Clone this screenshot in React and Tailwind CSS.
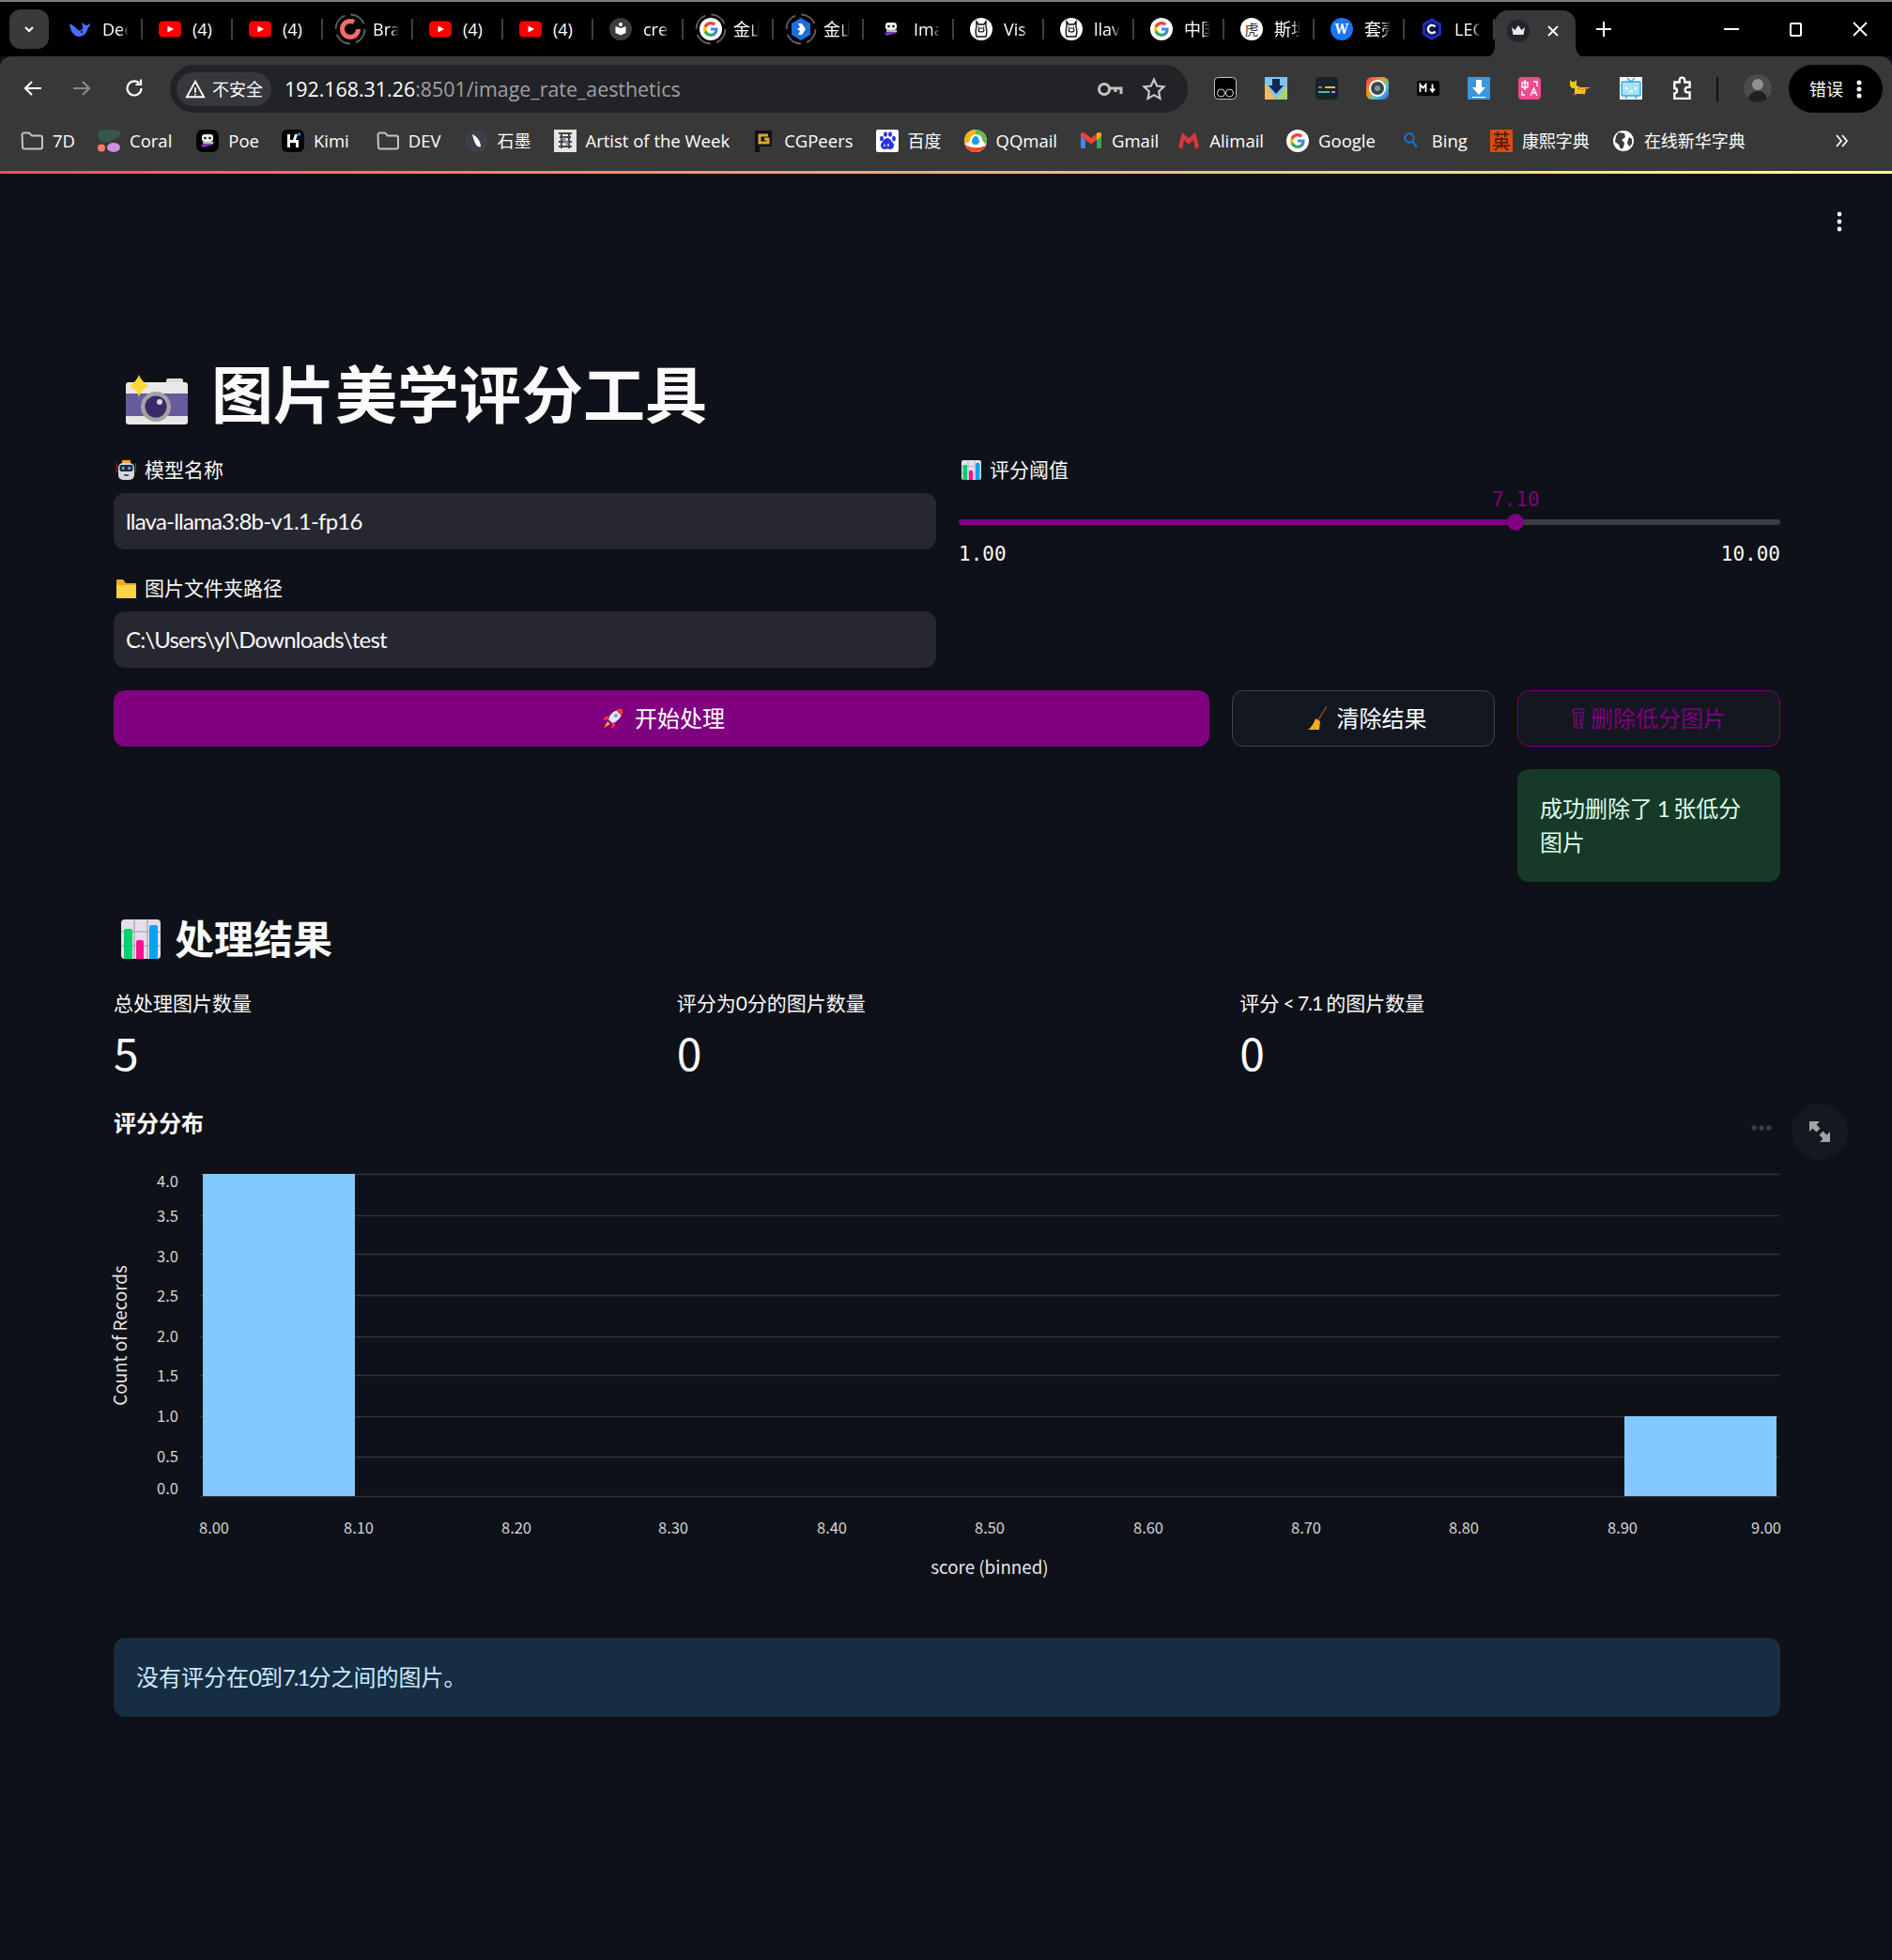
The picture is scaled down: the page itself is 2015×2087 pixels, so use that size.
import React from 'react';

const CHROME = "font-['Open_Sans','Noto_Sans_CJK_SC',sans-serif]";

// favicons ---------------------------------------------------------------
const YouTube = () => (
  <svg width="24" height="24" viewBox="0 0 24 24"><rect y="3.5" width="24" height="17" rx="4.5" fill="#ff0000" /><path d="M9.5 8.5l6.5 3.5-6.5 3.5z" fill="#fff" /></svg>
);
const Google = () => (
  <svg width="24" height="24" viewBox="0 0 24 24">
    <circle cx="12" cy="12" r="12" fill="#fff" />
    <path d="M19.6 12.2c0-.6-.1-1.100-.2-1.600H12v3h4.300c-.2 1-.8 1.800-1.600 2.400v2h2.600c1.500-1.400 2.300-3.400 2.300-5.800z" fill="#4285f4" />
    <path d="M12 20c2.200 0 4-.7 5.300-2l-2.600-2c-.7.500-1.600.8-2.700.8-2.100 0-3.900-1.400-4.500-3.300H4.800v2.100C6.100 18.200 8.900 20 12 20z" fill="#34a853" />
    <path d="M7.500 13.500c-.3-1-.3-2 0-3V8.400H4.800c-.9 1.800-.9 3.800 0 7.200z" fill="#fbbc05" />
    <path d="M12 7.200c1.200 0 2.200.4 3 1.200l2.300-2.300C15.900 4.800 14.100 4 12 4 8.900 4 6.100 5.800 4.800 8.400l2.700 2.100C8.100 8.600 9.900 7.200 12 7.200z" fill="#ea4335" />
  </svg>
);
const Whale = () => (
  <svg width="24" height="24" viewBox="0 0 24 24"><path d="M1 7C3 6 6 9 9 12c2 2 5 2 6-1 .5-2-1-4-1-6 2 1 4 3 6 3 1-1 2-2 3-2 0 2-1 4-2.500 5-.5 5-4.500 9-9.500 9S2 14 1 7z" fill="#4d6bfe" /><circle cx="14" cy="15" r="1" fill="#000" /></svg>
);
const Ringed = ({ children }) => (
  <span className="relative flex h-[24px] w-[24px] items-center justify-center">
    <svg className="absolute -left-[6px] -top-[6px]" width="36" height="36" viewBox="0 0 36 36"><circle cx="18" cy="18" r="15.500" fill="none" stroke="#5f5f5f" strokeWidth="2" strokeDasharray="18 6.300" /></svg>
    {children}
  </span>
);
const Brave = () => (
  <svg width="24" height="24" viewBox="0 0 24 24"><circle cx="12" cy="12" r="8.500" fill="none" stroke="#ef6a6a" strokeWidth="5" strokeDasharray="44 10" /></svg>
);
const Cre = () => (
  <svg width="24" height="24" viewBox="0 0 24 24"><circle cx="12" cy="12" r="12" fill="#3c3c3c" /><path d="M6.500 9l5.500 2 5.500-2v7l-5.500 2.500L6.500 16z" fill="#fff" /><circle cx="12" cy="7" r="2" fill="#fff" /></svg>
);
const KDocs = () => (
  <svg width="24" height="24" viewBox="0 0 24 24"><path d="M12 0l10 6v12l-10 6-10-6V6z" fill="#1d6fe0" /><path d="M9 6h4l4 6-4 6H9l2-4-3-2 3-2z" fill="#fff" /></svg>
);
const PoeBot = ({ bg = '#000' }) => (
  <svg width="24" height="24" viewBox="0 0 24 24"><rect width="24" height="24" rx="7" fill={bg} /><rect x="6" y="5" width="12" height="8" rx="3" fill="#eee" /><circle cx="9.500" cy="9" r="1.300" fill="#111" /><circle cx="14.500" cy="9" r="1.300" fill="#111" /><path d="M5 16l14-3-1 3-11 3z" fill="#7d3bb5" /><path d="M7 14h11" stroke="#eee" strokeWidth="1.500" /></svg>
);
const Llama = () => (
  <svg width="24" height="24" viewBox="0 0 24 24"><circle cx="12" cy="12" r="12" fill="#fff" /><path d="M7 4v6c-1 2-1 6 0 10h10c1-4 1-8 0-10V4l-2 3H9z" fill="none" stroke="#111" strokeWidth="1.400" /><ellipse cx="12" cy="13" rx="3" ry="2" fill="none" stroke="#111" strokeWidth="1.200" /><circle cx="9.500" cy="10" r=".8" fill="#111" /><circle cx="14.500" cy="10" r=".8" fill="#111" /></svg>
);
const Hu = () => (
  <span className="flex h-[24px] w-[24px] items-center justify-center rounded-full bg-white text-[15px] leading-none text-[#333]">虎</span>
);
const Wcoin = () => (
  <span className="flex h-[24px] w-[24px] items-center justify-center rounded-full bg-[#1877f2] font-serif text-[15px] font-bold leading-none text-white">W</span>
);
const Lec = () => (
  <svg width="24" height="24" viewBox="0 0 24 24"><path d="M12 0l10 6v12l-10 6-10-6V6z" fill="#1a2fb0" /><path d="M12 4l7 4v8l-7 4-7-4V8z" fill="#0b1250" /><path d="M15.500 9.500A4.200 4.200 0 1 0 15.500 14.500" fill="none" stroke="#fff" strokeWidth="2.400" /></svg>
);
const Crown = () => (
  <svg width="24" height="24" viewBox="0 0 24 24"><circle cx="12" cy="12" r="12" fill="#23242e" /><path d="M5 8l3.500 3L12 6l3.500 5L19 8l-1.500 8h-11z" fill="#e9e9e9" /></svg>
);

const Folder = () => (
  <svg width="24" height="24" viewBox="0 0 24 24"><path d="M1.500 5.500a2 2 0 0 1 2-2h5.500l3 3h9a2 2 0 0 1 2 2v10a2 2 0 0 1-2 2h-17a2 2 0 0 1-2-2z" fill="none" stroke="#c4c4c4" strokeWidth="2" /></svg>
);
const Coral = () => (
  <svg width="24" height="24" viewBox="0 0 24 24"><path d="M0 5c0-4 3-5 10-5s14 0 14 4-2 5-6 6-4 4-9 4-9-4-9-9z" fill="#37574a" /><circle cx="4" cy="19.500" r="4" fill="#ff7a59" /><ellipse cx="17" cy="19" rx="7" ry="5" fill="#d18ee2" /></svg>
);
const KimiIcon = () => (
  <svg width="24" height="24" viewBox="0 0 24 24"><rect width="24" height="24" rx="6" fill="#000" /><path d="M6 5h3v6h3l2-6h3l-2 6h3v8h-3v-5H9v5H6z" fill="#fff" /><circle cx="18.500" cy="5" r="1.800" fill="#1e88ff" /></svg>
);
const Shimo = () => (
  <svg width="24" height="24" viewBox="0 0 24 24"><circle cx="12" cy="12" r="12" fill="#3c4048" /><path d="M7 5c5 2 9 8 9 13-2 1-4 0-5-2C9 13 8 9 7 5z" fill="#fff" /></svg>
);
const Artist = () => (
  <svg width="24" height="24" viewBox="0 0 24 24"><rect width="24" height="24" fill="#e4e4e4" /><path d="M5 4h14M6 8h12M8 4v16M16 4v16M5 13h14M5 18h14" stroke="#444" strokeWidth="2" /><path d="M9 9l6 7" stroke="#8a8fb0" strokeWidth="3" /></svg>
);
const CGPeers = () => (
  <svg width="24" height="24" viewBox="0 0 24 24"><path d="M3 1h18v17H8v6H3z" fill="#111" /><path d="M17 6h-9v8h9v-4h-4" fill="none" stroke="#d5a92a" strokeWidth="3" /></svg>
);
const Baidu = () => (
  <svg width="24" height="24" viewBox="0 0 24 24"><rect width="24" height="24" rx="2" fill="#fff" /><ellipse cx="6" cy="9.500" rx="2" ry="2.700" fill="#2932e1" /><ellipse cx="10" cy="5" rx="2" ry="2.700" fill="#2932e1" /><ellipse cx="15" cy="5" rx="2" ry="2.700" fill="#2932e1" /><ellipse cx="19" cy="9.500" rx="2" ry="2.700" fill="#2932e1" /><path d="M12 9c3 0 4 3 6 5s1 7-3 7c-1 0-2-.5-3-.5s-2 .5-3 .5c-4 0-5-5-3-7s3-5 6-5z" fill="#2932e1" /><path d="M9 15.500v2.500M13 15v3" stroke="#fff" strokeWidth="1.300" /></svg>
);
const QQmail = () => (
  <svg width="24" height="24" viewBox="0 0 24 24"><circle cx="12" cy="12" r="12" fill="#fff" /><path d="M12 0a12 12 0 0 0-11.500 15.500L6 12c0-4 2-6.500 6-7z" fill="#f6b21b" /><path d="M12 0c6 0 12 5 12 12 0 2-.5 3-1 4l-4-5c0-3-2-6-7-6z" fill="#62bb46" /><path d="M.7 16C3 21 7 24 12 24c5 0 9-3 11-7-4 2-14 4-22-1z" fill="#ee4a1b" /><path d="M12 7c2 0 3.500 2 3.500 4l1 3c-1 .5-1.500 0-1.500 0 0 1-.5 1.500-1 2h-4c-.5-.5-1-1-1-2 0 0-.5.5-1.500 0l1-3C8.500 9 10 7 12 7z" fill="#1e9be8" /></svg>
);
const Gmail = () => (
  <svg width="24" height="24" viewBox="0 0 24 24"><path d="M1 20h5V11l-5-4z" fill="#4285f4" /><path d="M18 20h5V7l-5 4z" fill="#34a853" /><path d="M1 7V5c0-2 3-2.500 4-1.500l7 5.500 7-5.500c1-1 4-.5 4 1.500v2l-11 8.500z" fill="#ea4335" /><path d="M18 4v7l5-4V5c0-2-3-2.500-5-1z" fill="#fbbc05" /></svg>
);
const Alimail = () => (
  <svg width="24" height="24" viewBox="0 0 24 24"><path d="M5 3l7 6 7-6 4 15-4 3-2-10-5 5-5-5-2 10-4-3z" fill="#d9363e" /></svg>
);
const BingSearch = () => (
  <svg width="24" height="24" viewBox="0 0 24 24"><circle cx="10" cy="9" r="4.800" fill="none" stroke="#1976d2" strokeWidth="2" /><path d="M13.500 13l4.500 5.500" stroke="#1976d2" strokeWidth="2" /></svg>
);
const Kangxi = () => (
  <svg width="24" height="24" viewBox="0 0 24 24"><rect width="24" height="24" fill="#d84a12" /><path d="M4 5h16M8 2v6M16 2v6M6 10h12v4H6zM12 8v12M3 17h18M5 22l5-5M19 22l-5-5" stroke="#461804" strokeWidth="1.600" fill="none" /></svg>
);
const Globe = () => (
  <svg width="24" height="24" viewBox="0 0 24 24"><circle cx="12" cy="12" r="11" fill="#fff" /><path d="M7 3l6 1 1 4-4 3 3 3-1 5-3 2-2-5-4-3 1-6zM18 8l3 2v5l-3 3-2-4z" fill="#3a3a3a" /></svg>
);

// toolbar extension icons
const Ext = {
  glasses: <svg width="24" height="24" viewBox="0 0 24 24"><rect x=".5" y=".5" width="23" height="23" rx="4" fill="#000" stroke="#c4c4c4" /><circle cx="7.500" cy="17" r="4" fill="none" stroke="#ddd" /><circle cx="16.500" cy="17" r="4" fill="none" stroke="#ddd" /></svg>,
  map: <svg width="24" height="24" viewBox="0 0 24 24"><rect width="24" height="24" fill="#7fc4ec" /><path d="M0 6l12 18H0z" fill="#f4b860" /><path d="M24 8L12 24h12z" fill="#a5d36f" /><path d="M8 2h8v7h4l-8 9-8-9h4z" fill="#0d2a55" /></svg>,
  dark: <svg width="24" height="24" viewBox="0 0 24 24"><rect width="24" height="24" rx="4" fill="#16232b" /><rect x="3" y="10" width="4" height="2" fill="#e05d4f" /><rect x="10" y="10" width="11" height="2" fill="#eeb83d" /><rect x="3" y="15" width="12" height="2" fill="#3dbfae" /><rect x="17" y="15" width="4" height="2" fill="#c38be0" /></svg>,
  lens: <svg width="24" height="24" viewBox="0 0 24 24"><defs><linearGradient id="lg" x1="0" y1="0" x2="1" y2="1"><stop stopColor="#f0356b" /><stop offset=".4" stopColor="#f49a1e" /><stop offset=".7" stopColor="#36c6d8" /><stop offset="1" stopColor="#5a49e0" /></linearGradient></defs><rect width="24" height="24" rx="6" fill="url(#lg)" /><circle cx="12" cy="12" r="9" fill="#fff" /><circle cx="12" cy="12" r="7" fill="#3a4652" /><circle cx="12" cy="12" r="3" fill="#7f98a8" /></svg>,
  md: <svg width="24" height="16" viewBox="0 0 24 16"><rect width="24" height="16" rx="2" fill="#000" /><path d="M3.500 12V4l3 3.500L9.500 4v8M16.500 3.500V10M14 8.500l2.500 3 2.500-3" fill="none" stroke="#fff" strokeWidth="1.800" /></svg>,
  dl: <svg width="24" height="24" viewBox="0 0 24 24"><rect width="24" height="24" fill="#3b97d9" /><path d="M9 3h6v8h4l-7 8-7-8h4z" fill="#fff" /><rect x="5" y="21" width="14" height="1" fill="#fff" /></svg>,
  zh: <svg width="24" height="24" viewBox="0 0 24 24"><rect width="24" height="24" rx="4" fill="#ec4c8b" /><path d="M4 6h6v5H4zM7 3v11M4 15v4h3M16 5h4v5M13 20l3.500-8 3.500 8M14.500 17h4" fill="none" stroke="#fff" strokeWidth="1.400" /></svg>,
  cat: <svg width="24" height="24" viewBox="0 0 24 24"><path d="M1 3l2 2h3l2-2v6l4 2h11l-5 2-1 5H8l-2 1V12H3L1 9z" fill="#f0c419" /><path d="M3 18l3 1M14 18l3 1M10 12l1 1M14 13l1 1M17 12l1 1" stroke="#b5461c" strokeWidth="1.200" /></svg>,
  tv: <svg width="24" height="24" viewBox="0 0 24 24"><rect width="24" height="24" fill="#fff" /><rect x="2" y="5" width="20" height="15" rx="1" fill="#a5e2f7" stroke="#27a9e1" strokeWidth="1.400" /><path d="M8 1l4 4 4-4M6 23l2-3M18 23l-2-3" stroke="#27a9e1" strokeWidth="1.400" fill="none" /><path d="M6 11l2 1.500-2 1M18 11l-2 1.500 2 1M10 15q1 1 2 0 1 1 2 0" stroke="#fff" strokeWidth="1.300" fill="none" /></svg>,
};

const TABS = [
  { icon: <Whale />, text: 'Dee' },
  { icon: <YouTube />, text: '(4)', full: true },
  { icon: <YouTube />, text: '(4)', full: true },
  { icon: <Ringed><Brave /></Ringed>, text: 'Bra' },
  { icon: <YouTube />, text: '(4)', full: true },
  { icon: <YouTube />, text: '(4)', full: true },
  { icon: <Cre />, text: 'cre' },
  { icon: <Ringed><Google /></Ringed>, text: '金山' },
  { icon: <Ringed><KDocs /></Ringed>, text: '金山' },
  { icon: <PoeBot />, text: 'Ima' },
  { icon: <Llama />, text: 'Vis' },
  { icon: <Llama />, text: 'llav' },
  { icon: <Google />, text: '中国' },
  { icon: <Hu />, text: '斯坦' },
  { icon: <Wcoin />, text: '套壳' },
  { icon: <Lec />, text: 'LEC' },
];

const BOOKMARKS = [
  { icon: <Folder />, text: '7D' },
  { icon: <Coral />, text: 'Coral', extra: 'mr-[2px]' },
  { icon: <PoeBot />, text: 'Poe' },
  { icon: <KimiIcon />, text: 'Kimi', extra: 'mr-[5px]' },
  { icon: <Folder />, text: 'DEV', extra: 'mr-[2px]' },
  { icon: <Shimo />, text: '石墨', cjk: true },
  { icon: <Artist />, text: 'Artist of the Week' },
  { icon: <CGPeers />, text: 'CGPeers' },
  { icon: <Baidu />, text: '百度', cjk: true },
  { icon: <QQmail />, text: 'QQmail' },
  { icon: <Gmail />, text: 'Gmail', extra: '-mr-[4px]' },
  { icon: <Alimail />, text: 'Alimail' },
  { icon: <Google />, text: 'Google', extra: 'mr-[2px]' },
  { icon: <BingSearch />, text: 'Bing' },
  { icon: <Kangxi />, text: '康熙字典', cjk: true },
  { icon: <Globe />, text: '在线新华字典', cjk: true },
];

function BrowserChrome() {
  return (
    <header className={`${CHROME} text-white`}>
      {/* tab strip */}
      <div className="flex h-[60px] items-center border-t-2 border-[#7d7d7d] bg-black">
        <div className="ml-[10px] flex h-[42px] w-[42px] shrink-0 items-center justify-center rounded-[12px] bg-[#3a3a3a]">
          <svg width="16" height="16" viewBox="0 0 16 16"><path d="M4 6l4 4 4-4" fill="none" stroke="#fff" strokeWidth="2" /></svg>
        </div>
        <div className="ml-[4px] flex">
          {TABS.map((t, i) => (
            <div key={i} className="relative flex h-[36px] w-[96px] items-center pl-[17px]">
              {t.icon}
              <span className={`ml-[12px] w-[38px] whitespace-nowrap text-[18px] leading-[24px] ${t.full ? '' : '[mask-image:linear-gradient(to_right,black_19px,transparent_28px)]'}`}>{t.text}</span>
              <span className="absolute right-0 top-[7px] h-[22px] w-[2px] bg-[#3f3f3f]" />
            </div>
          ))}
        </div>
        <div className="relative -mb-[2px] flex h-[51px] w-[86px] items-center self-end rounded-t-[14px] bg-[#383838] pb-[8px] pl-[13px]">
          <span className="absolute -left-[12px] bottom-0 h-[12px] w-[12px] bg-[radial-gradient(circle_at_0_0,transparent_11.500px,#383838_12px)]" />
          <span className="absolute -right-[12px] bottom-0 h-[12px] w-[12px] bg-[radial-gradient(circle_at_100%_0,transparent_11.500px,#383838_12px)]" />
          <Crown />
          <svg className="ml-[18px]" width="14" height="14" viewBox="0 0 14 14"><path d="M2 2l10 10M12 2L2 12" stroke="#fff" strokeWidth="1.800" /></svg>
        </div>
        <svg className="ml-[21px]" width="18" height="18" viewBox="0 0 18 18"><path d="M9 1v16M1 9h16" stroke="#fff" strokeWidth="2" /></svg>
        <div className="ml-auto flex items-center">
          <span className="h-[2px] w-[16px] bg-white" />
          <span className="ml-[54px] h-[15px] w-[13px] rounded-[2px] border-2 border-white" />
          <svg className="ml-[54px] mr-[26px]" width="16" height="16" viewBox="0 0 16 16"><path d="M1 1l14 14M15 1L1 15" stroke="#fff" strokeWidth="1.800" /></svg>
        </div>
      </div>

      {/* toolbar */}
      <div className="flex h-[60px] items-start rounded-t-[12px] bg-[#383838] pt-[9px]">
        <svg className="ml-[23px] mt-[13px]" width="24" height="24" viewBox="0 0 24 24"><path d="M21 12H4M11 5l-7 7 7 7" fill="none" stroke="#fff" strokeWidth="2.200" /></svg>
        <svg className="ml-[28px] mt-[13px]" width="24" height="24" viewBox="0 0 24 24"><path d="M3 12h17M13 5l7 7-7 7" fill="none" stroke="#8a8a8a" strokeWidth="2.200" /></svg>
        <svg className="ml-[32px] mt-[13px]" width="24" height="24" viewBox="0 0 24 24"><path d="M19.500 12a7.500 7.500 0 1 1-2.500-5.600M19 2.500v5.500h-5.500" fill="none" stroke="#fff" strokeWidth="2.200" /></svg>
        <div className="ml-[26px] flex h-[51px] w-[1084px] items-center rounded-full bg-[#222327] pl-[7px]">
          <div className="flex h-[36px] w-[101px] items-center gap-[7px] rounded-full bg-[#36383c] pl-[9px]">
            <svg width="22" height="22" viewBox="0 0 24 24"><path d="M12 3L2 21h20zM12 10v6M12 17.500v1.500" fill="none" stroke="#fff" strokeWidth="2" /></svg>
            <span className="whitespace-nowrap text-[18px] leading-none">不安全</span>
          </div>
          <span className="ml-[14px] text-[21.400px] leading-none"><span className="text-white">192.168.31.26</span><span className="text-[#a0a0a0]">:8501/image_rate_aesthetics</span></span>
          <svg className="ml-auto" width="28" height="24" viewBox="0 0 28 24"><circle cx="8" cy="12" r="5.500" fill="none" stroke="#c4c4c4" strokeWidth="3" /><path d="M13 11h13v6M20 11v4" fill="none" stroke="#c4c4c4" strokeWidth="3" /></svg>
          <svg className="ml-[20px] mr-[23px]" width="26" height="26" viewBox="0 0 24 24"><path d="M12 2.500l2.900 6.300 6.800.8-5 4.700 1.300 6.800-6-3.400-6 3.400 1.300-6.800-5-4.700 6.800-.8z" fill="none" stroke="#c8c8c8" strokeWidth="2" /></svg>
        </div>
        <div className="ml-[28px] mt-[13px] flex h-[24px] items-center gap-[30px]">
          {Object.keys(Ext).map((k) => <span key={k} className="flex h-[24px] w-[24px] items-center justify-center">{Ext[k]}</span>)}
          <svg width="26" height="26" viewBox="0 0 24 24"><path d="M4 6h5V4a2.500 2.500 0 0 1 5 0v2h5v5h-2a2.500 2.500 0 0 0 0 5h2v6H4v-5a2.500 2.500 0 0 0 0-5z" fill="none" stroke="#fff" strokeWidth="2.200" /></svg>
        </div>
        <span className="ml-[23px] mt-[13px] h-[26px] w-[2px] bg-[#111]" />
        <span className="ml-[27px] mt-[10px] flex h-[30px] w-[30px] items-center justify-center overflow-hidden rounded-full bg-[#4a4c4d]">
          <svg width="30" height="30" viewBox="0 0 30 30"><circle cx="15" cy="11" r="6" fill="#8e9092" /><path d="M4 30c1-9 6-12 11-12s10 3 11 12z" fill="#1f2021" /></svg>
        </span>
        <div className="ml-[18px] flex h-[51px] w-[100px] items-center rounded-full bg-black pl-[22px]">
          <span className="text-[18px] leading-none">错误</span>
          <svg className="ml-[13px]" width="8" height="24" viewBox="0 0 8 24"><circle cx="4" cy="5" r="2.500" fill="#fff" /><circle cx="4" cy="12" r="2.500" fill="#fff" /><circle cx="4" cy="19" r="2.500" fill="#fff" /></svg>
        </div>
      </div>

      {/* bookmarks */}
      <div className="flex h-[62px] items-center gap-[24px] bg-[#383838] pb-[2px] pl-[22px] pr-[46px]">
        {BOOKMARKS.map((b, i) => (
          <div key={i} className={`flex items-center gap-[10px] ${b.extra || ''}`}>
            <span className="flex h-[24px] w-[24px] shrink-0 items-center justify-center">{b.icon}</span>
            <span className={`whitespace-nowrap leading-[24px] ${b.cjk ? 'text-[18px]' : 'text-[18.500px]'}`}>{b.text}</span>
          </div>
        ))}
        <svg className="ml-auto" width="16" height="16" viewBox="0 0 16 16"><path d="M3 2l5 6-5 6M9 2l5 6-5 6" fill="none" stroke="#fff" strokeWidth="1.800" /></svg>
      </div>
      {/* streamlit's rainbow bar */}
      <div className="h-[3px] bg-gradient-to-r from-[#ff4b4b] to-[#ffff8c]" />
    </header>
  );
}

// emoji drawings ---------------------------------------------------------
const CameraEmoji = () => (
  <svg width="68" height="54" viewBox="0 0 68 54" className="mt-[12px] shrink-0">
    <rect x="44" y="4" width="18" height="6" rx="2" fill="#dcdcdc" />
    <rect x="1" y="8" width="66" height="45" rx="3" fill="#e8e8e8" />
    <rect x="1" y="20" width="66" height="24" fill="#675a9e" />
    <circle cx="33" cy="34" r="16" fill="#a3a3a3" />
    <circle cx="33" cy="34" r="11.500" fill="#3a2a6a" />
    <circle cx="37" cy="29" r="3" fill="#d9d4ee" />
    <path d="M15 0c1 4 5 8 10 12-5 3-9 7-10 12-1-5-5-9-10-12 5-4 9-8 10-12z" fill="#fdd835" />
  </svg>
);
const RobotEmoji = () => (
  <svg width="21" height="21" viewBox="0 0 21 21" className="shrink-0">
    <rect x="6" y="0" width="9" height="4" fill="#f6a623" />
    <rect x="2" y="3" width="17" height="18" rx="5" fill="#d5d5dd" />
    <path d="M0 3v10M21 3v10" stroke="#d33" strokeWidth="1.500" />
    <rect x="3.500" y="5" width="14" height="7" rx="2" fill="#1f2a3a" />
    <rect x="6" y="7" width="2.500" height="3" fill="#3fc1f0" />
    <rect x="12.500" y="7" width="2.500" height="3" fill="#3fc1f0" />
    <rect x="8" y="15" width="5" height="2" fill="#555" />
  </svg>
);
const FolderEmoji = () => (
  <svg width="21" height="21" viewBox="0 0 21 21" className="shrink-0">
    <path d="M0 2a1 1 0 0 1 1-1h6l3 4h10a1 1 0 0 1 1 1v14H0z" fill="#f6a623" />
    <path d="M0 7h21v14H0z" fill="#fdd33f" />
  </svg>
);
const ChartEmoji = ({ size = 21 }) => (
  <svg width={size} height={size} viewBox="0 0 42 42" className="shrink-0">
    <rect width="42" height="42" rx="4" fill="#e5dcec" />
    <path d="M14 0v42M28 0v42M0 13h42M0 28h42" stroke="#b5adbd" strokeWidth="1.500" />
    <path d="M3 12a2 2 0 0 1 2-2h5a2 2 0 0 1 2 2v30H5a2 2 0 0 1-2-2z" fill="#00d26a" />
    <path d="M16 24a2 2 0 0 1 2-2h4a2 2 0 0 1 2 2v18h-8z" fill="#ff0f92" />
    <path d="M30 8a2 2 0 0 1 2-2h5a2 2 0 0 1 2 2v32a2 2 0 0 1-2 2h-7z" fill="#00a6ed" />
  </svg>
);
const RocketEmoji = () => (
  <svg width="24" height="24" viewBox="0 0 24 24" className="shrink-0">
    <path d="M22 2c-6 0-11 3-14 8l-1 3 4 4 3-1c5-3 8-8 8-14z" fill="#ece6f2" />
    <path d="M22 2c-2.500 0-5 .5-7 1.500L20.500 9C21.500 7 22 4.500 22 2z" fill="#f33" />
    <path d="M8 10H4l-3 4 6-1zM14 16v4l-4 3 1-6z" fill="#f33" />
    <circle cx="15" cy="9" r="2" fill="#4ab4f0" />
    <path d="M6 15l-4 7 7-4z" fill="#f6a623" />
  </svg>
);
const BroomEmoji = () => (
  <svg width="22" height="26" viewBox="0 0 22 26" className="shrink-0">
    <path d="M20 0L10 16" stroke="#7b3f21" strokeWidth="1.800" />
    <path d="M8 13l5 3-1 9H0c3-2 6-6 8-12z" fill="#f9a825" />
  </svg>
);
const TrashEmoji = () => (
  <svg width="14" height="24" viewBox="0 0 14 24" className="shrink-0">
    <rect x="1" y="2" width="12" height="4" rx="2" fill="none" stroke="#6b0f6b" strokeWidth="1.500" />
    <path d="M2 6l1 16h8l1-16M5 8v12M9 8v12" fill="none" stroke="#6b0f6b" strokeWidth="1.500" />
  </svg>
);

function FieldLabel({ icon, children, className = '' }) {
  return (
    <div className={`flex h-[30px] items-center gap-[9px] pl-[3px] text-[21px] leading-none text-[#fafafa] ${className}`}>
      {icon}
      <span className="-mt-[2px]">{children}</span>
    </div>
  );
}

function TextInput({ value, className = '' }) {
  return (
    <div className={`flex h-[60px] items-center rounded-[12px] bg-[#262730] pl-[13px] text-[24px] leading-none tracking-[-0.8px] text-[#fafafa] ${className}`}>
      {value}
    </div>
  );
}

function Metric({ label, value }) {
  return (
    <div>
      <div className="-mt-[1px] flex h-[30px] items-center whitespace-pre text-[21px] leading-none text-[#fafafa]">{label}</div>
      <div className="mt-[5px] flex h-[70px] items-center pb-[7px] font-['Noto_Sans_CJK_SC',sans-serif] text-[48px] leading-none text-[#fafafa]">{value}</div>
    </div>
  );
}

// chart -------------------------------------------------------------------
const GRID = [20, 64, 105, 149, 193, 234, 278, 321, 363];
const Y_LABELS = [['4.0', 27], ['3.5', 64], ['3.0', 107], ['2.5', 149], ['2.0', 192], ['1.5', 234], ['1.0', 277], ['0.5', 320], ['0.0', 354]];
const X_LABELS = [['8.00', 107], ['8.10', 261], ['8.20', 429], ['8.30', 596], ['8.40', 765], ['8.50', 933], ['8.60', 1102], ['8.70', 1270], ['8.80', 1438], ['8.90', 1607], ['9.00', 1760]];

function Histogram() {
  return (
    <svg className="block overflow-visible" width="1775" height="470" viewBox="0 0 1775 470" fontFamily="'Noto Sans CJK SC', sans-serif">
      {GRID.map((y) => <line key={y} x1="92" x2="1774" y1={y + 0.5} y2={y + 0.5} stroke="#31333f" strokeWidth="1.500" />)}
      <rect x="95" y="20" width="162" height="343" fill="#83c9ff" />
      <rect x="1609" y="278" width="162" height="85" fill="#83c9ff" />
      {Y_LABELS.map(([t, y]) => <text key={t} x="69" y={y} textAnchor="end" dominantBaseline="central" fontSize="16.500" fill="#d3d4d8">{t}</text>)}
      {X_LABELS.map(([t, x]) => <text key={t} x={x} y="396" textAnchor="middle" dominantBaseline="central" fontSize="16.500" fill="#d3d4d8">{t}</text>)}
      <text x="933" y="437" textAnchor="middle" dominantBaseline="central" fontSize="18.800" fill="#e6e7ea">score (binned)</text>
      <text transform="translate(14 192) rotate(-90)" textAnchor="middle" fontSize="18.800" fill="#e6e7ea">Count of Records</text>
    </svg>
  );
}

export default function App() {
  return (
    <div className="flex min-h-[2087px] w-full flex-col bg-[#0e1117] font-['Lato','Noto_Sans_CJK_SC',sans-serif]">
      <BrowserChrome />
      <main className="relative w-[2015px] pl-[121px] pr-[119px] pb-[40px]">
        {/* streamlit menu */}
        <svg className="absolute right-[52px] top-[39px]" width="8" height="24" viewBox="0 0 8 24"><circle cx="4" cy="4" r="2.400" fill="#fafafa" /><circle cx="4" cy="12" r="2.400" fill="#fafafa" /><circle cx="4" cy="20" r="2.400" fill="#fafafa" /></svg>

        <h1 className="mt-[195px] flex h-[80px] items-center pl-[12px] text-[66px] font-bold leading-none text-[#fafafa]">
          <CameraEmoji />
          <span className="ml-[24px]">图片美学评分工具</span>
        </h1>

        <div className="mt-[25px] grid grid-cols-[876px_875px] gap-x-[24px]">
          <div>
            <FieldLabel icon={<RobotEmoji />}>模型名称</FieldLabel>
            <TextInput className="mt-[10px]" value="llava-llama3:8b-v1.1-fp16" />
            <FieldLabel className="mt-[26px]" icon={<FolderEmoji />}>图片文件夹路径</FieldLabel>
            <TextInput className="mt-[10px]" value="C:\Users\yl\Downloads\test" />
          </div>
          <div>
            <FieldLabel icon={<ChartEmoji size={21} />}>评分阈值</FieldLabel>
            <div className="relative mt-[38px] flex h-[6px] overflow-visible rounded-full bg-[#3a3c44]">
              <div className="h-[6px] w-[593px] rounded-l-full bg-[#800080]" />
              <span className="absolute left-[584px] top-[-6px] h-[18px] w-[18px] rounded-full bg-[#800080]" />
              <span className="absolute left-[568px] top-[-36px] w-[50px] text-center font-['DejaVu_Sans_Mono',monospace] text-[21px] leading-[30px] text-[#800080]">7.10</span>
            </div>
            <div className="mt-[16px] flex h-[30px] items-center justify-between font-['DejaVu_Sans_Mono',monospace] text-[21px] leading-none text-[#fafafa]">
              <span>1.00</span>
              <span>10.00</span>
            </div>
          </div>
        </div>

        <div className="mt-[24px] flex gap-[24px]">
          <div className="flex h-[60px] w-[1167px] items-center justify-center gap-[11px] rounded-[12px] bg-[#800080] pl-[4px] text-[24px] leading-none text-white">
            <RocketEmoji />
            <span>开始处理</span>
          </div>
          <div className="flex h-[60px] w-[280px] items-center justify-center gap-[9px] rounded-[12px] border border-[#42444d] bg-[#131720] pl-[8px] text-[24px] leading-none text-white">
            <BroomEmoji />
            <span>清除结果</span>
          </div>
          <div className="flex h-[60px] w-[280px] items-center justify-center gap-[6px] rounded-[12px] border border-[#800080] bg-[#131720] text-[24px] leading-none text-[#800080]">
            <TrashEmoji />
            <span>删除低分图片</span>
          </div>
        </div>

        <div className="ml-auto mt-[24px] h-[120px] w-[280px] rounded-[12px] bg-[#173928] px-[24px] py-[24px] text-[24px] leading-[36px] text-[#dffde9]">
          成功删除了<span className="tracking-[-1.300px]"> 1 </span>张低分图片
        </div>

        <h2 className="mt-[31px] flex h-[60px] items-center pl-[8px] text-[42px] font-bold leading-none text-[#fafafa]">
          <ChartEmoji size={42} />
          <span className="ml-[15px]">处理结果</span>
        </h2>

        <div className="mt-[23px] grid grid-cols-3 gap-x-[24px]">
          <Metric label="总处理图片数量" value="5" />
          <Metric label="评分为0分的图片数量" value="0" />
          <Metric label={<span>评分<span className="tracking-[-1.100px]"> {'<'} 7.1 </span>的图片数量</span>} value="0" />
        </div>

        <div className="relative mt-[21px] h-[36px]">
          <div className="flex h-[36px] items-center text-[24px] font-bold leading-none text-[#fafafa]">评分分布</div>
          <svg className="absolute left-[1743px] top-[19px]" width="24" height="8" viewBox="0 0 24 8"><circle cx="4" cy="4" r="2.700" fill="#3a3d44" /><circle cx="12" cy="4" r="2.700" fill="#3a3d44" /><circle cx="20" cy="4" r="2.700" fill="#3a3d44" /></svg>
          <div className="absolute left-[1787px] top-[-3px] flex h-[60px] w-[60px] items-center justify-center rounded-full bg-[#15191f]">
            <svg width="24" height="24" viewBox="0 0 24 24"><path d="M1 1h11L8.500 4.500l4 4-4 4-4-4L1 12zM23 23H12l3.500-3.500-4-4 4-4 4 4L23 12z" fill="#a3a4a7" /></svg>
          </div>
        </div>

        <div className="mt-[16px]">
          <Histogram />
        </div>

        <div className="mt-[44px] flex h-[84px] items-center rounded-[12px] bg-[#172d43] pl-[24px] text-[24px] leading-none text-[#c7ebff]">
          <span>没有评分在<span className="tracking-[-2px]">0</span>到<span className="tracking-[-2px]">7.1</span>分之间的图片。</span>
        </div>
      </main>
    </div>
  );
}
